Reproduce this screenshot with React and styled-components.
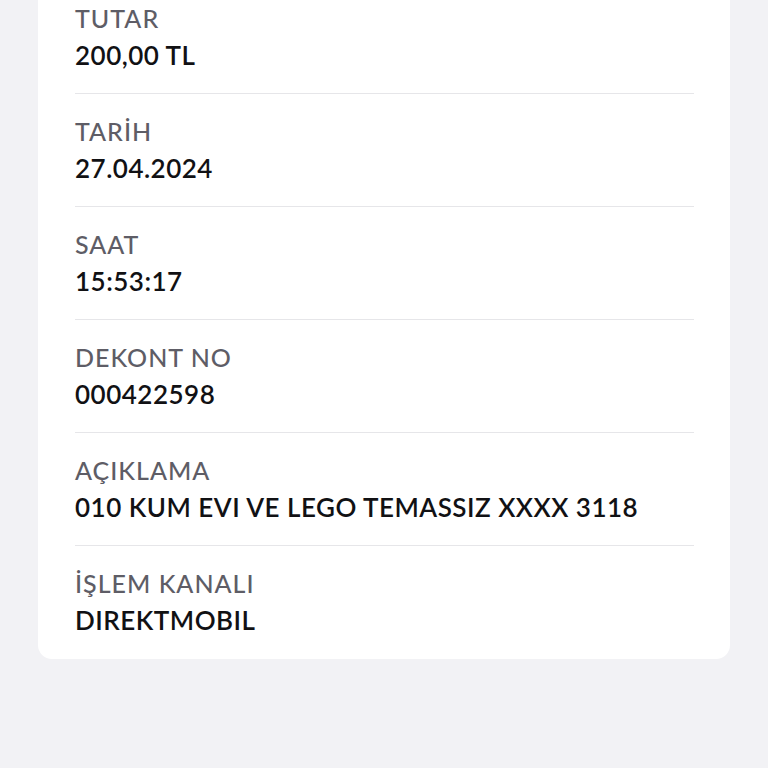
import React from 'react'
import styled, { createGlobalStyle } from 'styled-components'

var GlobalStyle = createGlobalStyle`
    html, body {
        margin: 0;
        padding: 0;
        background-color: #f2f2f5;
    }
    body {
        font-family: 'Lato', 'Liberation Sans', sans-serif;
    }
`

var Page = styled.div`
    width: 768px;
    height: 768px;
    overflow: hidden;
    background-color: #f2f2f5;
    padding: 0 38px;
    box-sizing: border-box;
`

var Card = styled.div`
    margin-top: -19px;
    background-color: #fff;
    border-radius: 14px;
    padding: 0 36px 0 37px;
`

var Row = styled.div`
    height: 113px;
    box-sizing: border-box;
    padding-top: 22px;
    border-bottom: ${props => props.last ? 'none' : '1px solid #e6e6e9'};
    display: flex;
    flex-direction: column;
    gap: 7px;
`

var Label = styled.div`
    font-size: 25px;
    line-height: 30px;
    font-weight: 500;
    color: #5e5d66;
    letter-spacing: 1px;
`

var Value = styled.div`
    font-size: 26px;
    line-height: 30px;
    font-weight: 600;
    color: #111114;
    letter-spacing: 0.5px;
`

var rows = [
    ['TUTAR', '200,00 TL'],
    ['TARİH', '27.04.2024'],
    ['SAAT', '15:53:17'],
    ['DEKONT NO', '000422598'],
    ['AÇIKLAMA', '010 KUM EVI VE LEGO TEMASSIZ XXXX 3118'],
    ['İŞLEM KANALI', 'DIREKTMOBIL'],
]

export default function App() {
    return (
        <Page>
            <GlobalStyle />
            <Card>
                {rows.map((r, i) => (
                    <Row key={r[0]} last={i === rows.length - 1}>
                        <Label>{r[0]}</Label>
                        <Value>{r[1]}</Value>
                    </Row>
                ))}
            </Card>
        </Page>
    )
}
